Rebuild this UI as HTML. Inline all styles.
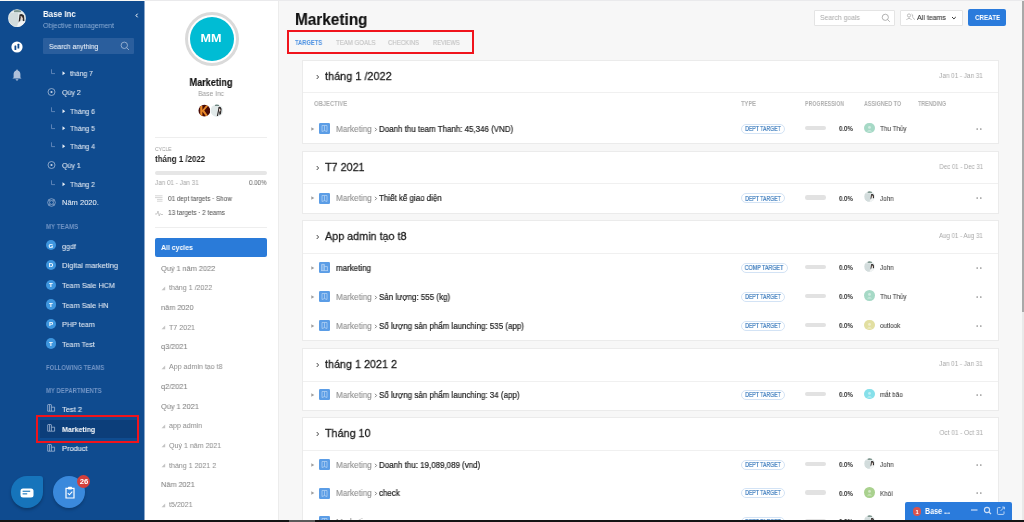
<!DOCTYPE html>
<html><head><meta charset="utf-8"><style>
html,body{margin:0;padding:0;width:1024px;height:522px;overflow:hidden;background:#f7f7f7;font-family:"Liberation Sans", sans-serif;}
body>div,body>svg{position:absolute;}
.t{white-space:nowrap;will-change:transform;}
</style></head><body>
<div style="left:0px;top:0px;width:1024px;height:1px;background:#eaeaec"></div>
<div style="left:0px;top:0px;width:145px;height:1px;background:#f8f8f6"></div>
<div style="left:0px;top:1px;width:144px;height:519px;background:#0f4b8f"></div>
<div style="left:144px;top:1px;width:1px;height:519px;background:#8aa6c9"></div>
<svg style="left:8px;top:9px" width="18" height="18" viewBox="0 0 18 18"><defs><clipPath id="cav"><circle cx="9" cy="9.2" r="8.7"/></clipPath></defs><g clip-path="url(#cav)"><rect width="18" height="18" fill="#e3eaea"/><rect x="1" y="4" width="9" height="14" fill="#d2dcdc"/><rect x="6" y="0" width="7" height="3.2" fill="#7d958d"/><path d="M11.5 5.5 Q14 4 16 6.5 L16.5 12 L15 13 L14.5 9 Q13 8 12.5 10 L11.5 16 L10 16 Q11 11 11.5 5.5 Z" fill="#2f2a2a"/><path d="M12.6 7 Q14.6 6.8 14.7 9.5 L13.6 11.5 Q12.5 10.5 12.6 7 Z" fill="#ead5cb"/><path d="M10.5 12.5 L17 12 L18 18 L9 18 Z" fill="#f2f4f4"/></g><circle cx="9" cy="9.2" r="8.6" fill="none" stroke="#f0f4f6" stroke-width="0.5"/></svg>
<svg style="left:11px;top:41px" width="12" height="12" viewBox="0 0 12 12"><circle cx="6" cy="6" r="5.6" fill="#fff"/><rect x="3.5" y="4.6" width="1.8" height="4.4" rx="0.5" fill="#0f4b8f"/><rect x="6.5" y="2.8" width="1.8" height="4.6" rx="0.5" fill="#0f4b8f"/></svg>
<svg style="left:12px;top:69px" width="10" height="12" viewBox="0 0 10 12"><path d="M5 0.6 C5.6 0.6 5.8 1 5.8 1.5 C7.6 2 8.4 3.5 8.4 5.4 L8.4 8.4 L9.6 9.6 L0.4 9.6 L1.6 8.4 L1.6 5.4 C1.6 3.5 2.4 2 4.2 1.5 C4.2 1 4.4 0.6 5 0.6 Z" fill="#aec0da"/><path d="M3.6 10.3 L6.4 10.3 C6.3 11.2 5.7 11.6 5 11.6 C4.3 11.6 3.7 11.2 3.6 10.3Z" fill="#aec0da"/></svg>
<div class="t" style="top:10px;font-size:8.8px;line-height:8.8px;color:#ffffff;font-weight:700;left:43px;transform:scaleX(0.904);transform-origin:0 0;">Base Inc</div>
<svg style="left:134px;top:12px" width="6" height="7" viewBox="0 0 6 7"><path d="M3.6 1.7 L2 3.5 L3.6 5.3" stroke="#fff" stroke-width="1.0" fill="none"/></svg>
<div class="t" style="top:22px;font-size:7.3px;line-height:7.3px;color:#8eaed6;left:43px;transform:scaleX(0.946);transform-origin:0 0;">Objective management</div>
<div style="left:43px;top:38px;width:91px;height:16px;background:#2a5e9d;border-radius:1px"></div>
<div class="t" style="top:43px;font-size:7.4px;line-height:7.4px;color:#e6edf6;-webkit-text-stroke:0.1px #e6edf6;left:48.7px;transform:scaleX(0.923);transform-origin:0 0;">Search anything</div>
<svg style="left:120px;top:41px" width="10" height="10" viewBox="0 0 10 10"><circle cx="4.3" cy="4.3" r="3.2" stroke="#a7bcd9" stroke-width="0.8" fill="none"/><path d="M6.6 6.6 L9 9" stroke="#a7bcd9" stroke-width="0.8"/></svg>
<svg style="left:50px;top:69px" width="18" height="8" viewBox="0 0 18 8"><path d="M1.5 0.3 L1.5 4.6 L5 4.6" stroke="#6e90c0" stroke-width="0.8" fill="none"/><path d="M12.5 2.2 L15.2 4.2 L12.5 6.2 Z" fill="#e8eef6"/></svg>
<div class="t" style="top:70px;font-size:7.5px;line-height:7.5px;color:#dfe7f1;-webkit-text-stroke:0.08px #dfe7f1;left:70.3px;transform:scaleX(0.919);transform-origin:0 0;">tháng 7</div>
<svg style="left:46px;top:86.5px" width="11" height="11" viewBox="0 0 11 11"><circle cx="5.5" cy="5" r="3.5" stroke="#b9c9e0" stroke-width="0.7" fill="none"/><circle cx="5.5" cy="5" r="1.1" fill="#c6d3e6"/></svg>
<div class="t" style="top:89px;font-size:7.5px;line-height:7.5px;color:#dfe7f1;-webkit-text-stroke:0.08px #dfe7f1;left:61.5px;transform:scaleX(0.939);transform-origin:0 0;">Qúy 2</div>
<svg style="left:50px;top:106.7px" width="18" height="8" viewBox="0 0 18 8"><path d="M1.5 0.3 L1.5 4.6 L5 4.6" stroke="#6e90c0" stroke-width="0.8" fill="none"/><path d="M12.5 2.2 L15.2 4.2 L12.5 6.2 Z" fill="#e8eef6"/></svg>
<div class="t" style="top:108px;font-size:7.5px;line-height:7.5px;color:#dfe7f1;-webkit-text-stroke:0.08px #dfe7f1;left:70.3px;transform:scaleX(0.908);transform-origin:0 0;">Tháng 6</div>
<svg style="left:50px;top:124.30000000000001px" width="18" height="8" viewBox="0 0 18 8"><path d="M1.5 0.3 L1.5 4.6 L5 4.6" stroke="#6e90c0" stroke-width="0.8" fill="none"/><path d="M12.5 2.2 L15.2 4.2 L12.5 6.2 Z" fill="#e8eef6"/></svg>
<div class="t" style="top:125px;font-size:7.5px;line-height:7.5px;color:#dfe7f1;-webkit-text-stroke:0.08px #dfe7f1;left:70.3px;transform:scaleX(0.908);transform-origin:0 0;">Tháng 5</div>
<svg style="left:50px;top:142.1px" width="18" height="8" viewBox="0 0 18 8"><path d="M1.5 0.3 L1.5 4.6 L5 4.6" stroke="#6e90c0" stroke-width="0.8" fill="none"/><path d="M12.5 2.2 L15.2 4.2 L12.5 6.2 Z" fill="#e8eef6"/></svg>
<div class="t" style="top:143px;font-size:7.5px;line-height:7.5px;color:#dfe7f1;-webkit-text-stroke:0.08px #dfe7f1;left:70.3px;transform:scaleX(0.908);transform-origin:0 0;">Tháng 4</div>
<svg style="left:46px;top:159.5px" width="11" height="11" viewBox="0 0 11 11"><circle cx="5.5" cy="5" r="3.5" stroke="#b9c9e0" stroke-width="0.7" fill="none"/><circle cx="5.5" cy="5" r="1.1" fill="#c6d3e6"/></svg>
<div class="t" style="top:162px;font-size:7.5px;line-height:7.5px;color:#dfe7f1;-webkit-text-stroke:0.08px #dfe7f1;left:61.5px;transform:scaleX(0.939);transform-origin:0 0;">Qúy 1</div>
<svg style="left:50px;top:179.5px" width="18" height="8" viewBox="0 0 18 8"><path d="M1.5 0.3 L1.5 4.6 L5 4.6" stroke="#6e90c0" stroke-width="0.8" fill="none"/><path d="M12.5 2.2 L15.2 4.2 L12.5 6.2 Z" fill="#e8eef6"/></svg>
<div class="t" style="top:181px;font-size:7.5px;line-height:7.5px;color:#dfe7f1;-webkit-text-stroke:0.08px #dfe7f1;left:70.3px;transform:scaleX(0.908);transform-origin:0 0;">Tháng 2</div>
<svg style="left:46px;top:196.9px" width="11" height="11" viewBox="0 0 11 11"><circle cx="5.5" cy="5.5" r="3.8" stroke="#b4c5de" stroke-width="0.65" fill="none"/><circle cx="5.5" cy="5.5" r="2" stroke="#b4c5de" stroke-width="0.6" fill="none"/><path d="M2.8 2.8 L4.1 4.1 M8.2 2.8 L6.9 4.1 M2.8 8.2 L4.1 6.9 M8.2 8.2 L6.9 6.9" stroke="#b4c5de" stroke-width="0.55"/></svg>
<div class="t" style="top:199px;font-size:7.5px;line-height:7.5px;color:#dfe7f1;-webkit-text-stroke:0.08px #dfe7f1;left:61.5px;transform:scaleX(1.003);transform-origin:0 0;">Năm 2020.</div>
<div class="t" style="top:223px;font-size:7.3px;line-height:7.3px;color:#7093c4;font-weight:700;left:45.6px;transform:scaleX(0.839);transform-origin:0 0;">MY TEAMS</div>
<div style="left:45.5px;top:239.9px;width:10.6px;height:10.6px;border-radius:50%;background:#3e96de"></div>
<div class="t" style="top:243px;font-size:6.2px;line-height:6.2px;color:#ffffff;font-weight:700;left:-149.2px;width:400px;text-align:center;">G</div>
<div class="t" style="top:243px;font-size:7.7px;line-height:7.7px;color:#dfe7f1;-webkit-text-stroke:0.08px #dfe7f1;left:62px;transform:scaleX(0.94);transform-origin:0 0;">ggdf</div>
<div style="left:45.5px;top:259.7px;width:10.6px;height:10.6px;border-radius:50%;background:#3e96de"></div>
<div class="t" style="top:262px;font-size:6.2px;line-height:6.2px;color:#ffffff;font-weight:700;left:-149.2px;width:400px;text-align:center;">D</div>
<div class="t" style="top:262px;font-size:7.7px;line-height:7.7px;color:#dfe7f1;-webkit-text-stroke:0.08px #dfe7f1;left:62px;transform:scaleX(0.978);transform-origin:0 0;">Digital marketing</div>
<div style="left:45.5px;top:279.6px;width:10.6px;height:10.6px;border-radius:50%;background:#3e96de"></div>
<div class="t" style="top:282px;font-size:6.2px;line-height:6.2px;color:#ffffff;font-weight:700;left:-149.2px;width:400px;text-align:center;">T</div>
<div class="t" style="top:282px;font-size:7.7px;line-height:7.7px;color:#dfe7f1;-webkit-text-stroke:0.08px #dfe7f1;left:62px;transform:scaleX(0.947);transform-origin:0 0;">Team Sale HCM</div>
<div style="left:45.5px;top:299.4px;width:10.6px;height:10.6px;border-radius:50%;background:#3e96de"></div>
<div class="t" style="top:302px;font-size:6.2px;line-height:6.2px;color:#ffffff;font-weight:700;left:-149.2px;width:400px;text-align:center;">T</div>
<div class="t" style="top:302px;font-size:7.7px;line-height:7.7px;color:#dfe7f1;-webkit-text-stroke:0.08px #dfe7f1;left:62px;transform:scaleX(0.94);transform-origin:0 0;">Team Sale HN</div>
<div style="left:45.5px;top:318.6px;width:10.6px;height:10.6px;border-radius:50%;background:#3e96de"></div>
<div class="t" style="top:321px;font-size:6.2px;line-height:6.2px;color:#ffffff;font-weight:700;left:-149.2px;width:400px;text-align:center;">P</div>
<div class="t" style="top:321px;font-size:7.7px;line-height:7.7px;color:#dfe7f1;-webkit-text-stroke:0.08px #dfe7f1;left:62px;transform:scaleX(0.94);transform-origin:0 0;">PHP team</div>
<div style="left:45.5px;top:338.4px;width:10.6px;height:10.6px;border-radius:50%;background:#3e96de"></div>
<div class="t" style="top:341px;font-size:6.2px;line-height:6.2px;color:#ffffff;font-weight:700;left:-149.2px;width:400px;text-align:center;">T</div>
<div class="t" style="top:341px;font-size:7.7px;line-height:7.7px;color:#dfe7f1;-webkit-text-stroke:0.08px #dfe7f1;left:62px;transform:scaleX(0.94);transform-origin:0 0;">Team Test</div>
<div class="t" style="top:364px;font-size:7.3px;line-height:7.3px;color:#7093c4;font-weight:700;left:45.6px;transform:scaleX(0.809);transform-origin:0 0;">FOLLOWING TEAMS</div>
<div class="t" style="top:387px;font-size:7.3px;line-height:7.3px;color:#7093c4;font-weight:700;left:45.6px;transform:scaleX(0.818);transform-origin:0 0;">MY DEPARTMENTS</div>
<div style="left:40px;top:420px;width:97px;height:18px;background:#0c3e7a"></div>
<svg style="left:47px;top:404.3px" width="9" height="9" viewBox="0 0 9 9"><path d="M0.7 7.2 L0.7 1 Q0.7 0.5 1.2 0.5 L3.9 0.5 Q4.4 0.5 4.4 1 L4.4 7.2 Z M2.55 0.8 L2.55 7 M4.4 3.2 L7.6 3.2 L7.6 7.2 L4.4 7.2" stroke="#a9bcd8" stroke-width="0.75" fill="none"/></svg>
<div class="t" style="top:406px;font-size:7.7px;line-height:7.7px;color:#dfe7f1;-webkit-text-stroke:0.12px #dfe7f1;left:61.9px;transform:scaleX(0.975);transform-origin:0 0;">Test 2</div>
<svg style="left:47px;top:424.0px" width="9" height="9" viewBox="0 0 9 9"><path d="M0.7 7.2 L0.7 1 Q0.7 0.5 1.2 0.5 L3.9 0.5 Q4.4 0.5 4.4 1 L4.4 7.2 Z M2.55 0.8 L2.55 7 M4.4 3.2 L7.6 3.2 L7.6 7.2 L4.4 7.2" stroke="#a9bcd8" stroke-width="0.75" fill="none"/></svg>
<div class="t" style="top:426px;font-size:7.7px;line-height:7.7px;color:#ffffff;font-weight:700;left:61.9px;transform:scaleX(0.917);transform-origin:0 0;">Marketing</div>
<svg style="left:47px;top:443.5px" width="9" height="9" viewBox="0 0 9 9"><path d="M0.7 7.2 L0.7 1 Q0.7 0.5 1.2 0.5 L3.9 0.5 Q4.4 0.5 4.4 1 L4.4 7.2 Z M2.55 0.8 L2.55 7 M4.4 3.2 L7.6 3.2 L7.6 7.2 L4.4 7.2" stroke="#a9bcd8" stroke-width="0.75" fill="none"/></svg>
<div class="t" style="top:445px;font-size:7.7px;line-height:7.7px;color:#dfe7f1;-webkit-text-stroke:0.12px #dfe7f1;left:61.9px;transform:scaleX(0.966);transform-origin:0 0;">Product</div>
<div style="left:36px;top:415px;width:103px;height:28px;border:2px solid #f0141c;box-sizing:border-box"></div>
<div style="left:11px;top:476px;width:32px;height:32px;background:#1674bb;border-radius:16px 3px 16px 16px;box-shadow:0 2px 3px rgba(0,0,0,0.25)"></div>
<svg style="left:20px;top:488px" width="14" height="10" viewBox="0 0 14 10"><rect x="0.5" y="0.5" width="13" height="9" rx="2.5" fill="#fff"/><rect x="2.6" y="2.7" width="7.6" height="1.1" fill="#1674bb"/><rect x="2.6" y="5.3" width="4.6" height="1.1" fill="#1674bb"/></svg>
<div style="left:53px;top:476px;width:32px;height:32px;background:#3a89dc;border-radius:50%;box-shadow:0 2px 3px rgba(0,0,0,0.2)"></div>
<svg style="left:64px;top:486px" width="12" height="13" viewBox="0 0 12 13"><path d="M2 2.4 L10 2.4 L10 12 L2 12 Z" stroke="#fff" stroke-width="1.2" fill="none"/><rect x="4" y="0.8" width="4" height="2.6" rx="0.6" fill="#fff"/><path d="M3.8 7.2 L5.4 8.8 L8.3 5.6" stroke="#fff" stroke-width="1.1" fill="none"/></svg>
<div style="left:77px;top:474.5px;width:13px;height:13px;background:#d33f3b;border-radius:50%"></div>
<div class="t" style="top:478px;font-size:7.0px;line-height:7.0px;color:#fff;font-weight:700;left:-116.5px;width:400px;text-align:center;transform:scaleX(1.103);transform-origin:50% 0;">26</div>
<div style="left:145px;top:1px;width:134px;height:519px;background:#fff;border-right:1px solid #ececec;box-sizing:border-box"></div>
<div style="left:184.5px;top:11.5px;width:54px;height:54px;border-radius:50%;box-sizing:border-box;border:3.5px solid #dadada;background:#fff"></div>
<div style="left:189.5px;top:16.5px;width:44px;height:44px;border-radius:50%;background:#00bcd4"></div>
<div class="t" style="top:33px;font-size:11.8px;line-height:11.8px;color:#ffffff;font-weight:700;left:11.300000000000011px;width:400px;text-align:center;transform:scaleX(1.068);transform-origin:50% 0;">MM</div>
<div class="t" style="top:78px;font-size:10.2px;line-height:10.2px;color:#111111;font-weight:700;-webkit-text-stroke:0.15px #111111;left:11px;width:400px;text-align:center;transform:scaleX(0.894);transform-origin:50% 0;">Marketing</div>
<div class="t" style="top:90px;font-size:7.0px;line-height:7.0px;color:#9a9a9a;left:11px;width:400px;text-align:center;transform:scaleX(0.954);transform-origin:50% 0;">Base Inc</div>
<svg style="left:197px;top:103px" width="28" height="16" viewBox="0 0 28 16"><defs><clipPath id="a1"><circle cx="7.4" cy="7.7" r="5.9"/></clipPath><clipPath id="a2"><circle cx="19.8" cy="7.7" r="6.2"/></clipPath></defs><g clip-path="url(#a1)"><rect width="15" height="16" fill="#4a0c06"/><path d="M3.2 3 L5.4 3 L5.4 7 L9.5 2 L11.5 2.5 L7.3 7.6 L11.5 13.5 L9.3 13.8 L5.4 8.6 L5.4 13.5 L3.2 13.5 Z" fill="#e98a2a"/></g><circle cx="19.8" cy="7.7" r="6.9" fill="#fff"/><g clip-path="url(#a2)"><rect x="13" width="15" height="16" fill="#e1e9e9"/><rect x="18" y="1" width="4" height="2" fill="#6d8580"/><path d="M21.5 4 Q24 3.2 24.6 6 L24 11 L22.5 12 L22 8 L21 13 L19.8 13 Q21 8 21.5 4 Z" fill="#2f2a2a"/><path d="M22 5.4 Q23.6 5.4 23.6 7.5 L22.7 9 Q21.8 8 22 5.4 Z" fill="#ead5cb"/></g></svg>
<div style="left:155px;top:137px;width:112px;height:1px;background:#eeeeee"></div>
<div class="t" style="top:146px;font-size:6.0px;line-height:6.0px;color:#9b9b9b;left:155.3px;transform:scaleX(0.824);transform-origin:0 0;">CYCLE</div>
<div class="t" style="top:155px;font-size:8.8px;line-height:8.8px;color:#1f1f1f;font-weight:700;left:155.3px;transform:scaleX(0.9);transform-origin:0 0;">tháng 1 /2022</div>
<div style="left:155px;top:171px;width:112px;height:3.5px;background:#e6e6e6;border-radius:2px"></div>
<div class="t" style="top:180px;font-size:6.9px;line-height:6.9px;color:#a6a6a6;left:155px;transform:scaleX(0.922);transform-origin:0 0;">Jan 01 - Jan 31</div>
<div class="t" style="top:180px;font-size:6.9px;line-height:6.9px;color:#7b7b7b;-webkit-text-stroke:0.1px #7b7b7b;right:757px;transform:scaleX(0.895);transform-origin:100% 0;">0.00%</div>
<svg style="left:155px;top:195px" width="8" height="7" viewBox="0 0 8 7"><path d="M0 0.8 L7.5 0.8 M0 2.6 L7.5 2.6 M2 4.4 L7.5 4.4 M2 6.2 L7.5 6.2" stroke="#b9b9b9" stroke-width="0.6"/></svg>
<div class="t" style="top:195px;font-size:7.0px;line-height:7.0px;color:#555555;-webkit-text-stroke:0.05px #555555;left:168.1px;transform:scaleX(0.906);transform-origin:0 0;">01 dept targets · Show</div>
<svg style="left:155px;top:210px" width="8" height="7" viewBox="0 0 8 7"><path d="M0 4 L2 4 L3 1 L4.2 6 L5.2 3.5 L6 4.5 L8 4.5" stroke="#a9a9a9" stroke-width="0.6" fill="none"/></svg>
<div class="t" style="top:209px;font-size:7.0px;line-height:7.0px;color:#555555;-webkit-text-stroke:0.05px #555555;left:168.1px;transform:scaleX(0.914);transform-origin:0 0;">13 targets · 2 teams</div>
<div style="left:155px;top:227px;width:112px;height:1px;background:#eeeeee"></div>
<div style="left:155px;top:238px;width:112px;height:19px;background:#2a7bd9;border-radius:2px"></div>
<div class="t" style="top:244px;font-size:7.4px;line-height:7.4px;color:#ffffff;font-weight:700;left:160.5px;transform:scaleX(0.935);transform-origin:0 0;">All cycles</div>
<div class="t" style="top:265px;font-size:7.6px;line-height:7.6px;color:#828282;-webkit-text-stroke:0.06px #828282;left:160.5px;transform:scaleX(0.965);transform-origin:0 0;">Quý 1 năm 2022</div>
<svg style="left:160.5px;top:285.6px" width="5" height="5" viewBox="0 0 5 5"><path d="M4.2 0.5 L4.2 4.2 L0.5 4.2 Z" fill="#c4c4c4"/></svg>
<div class="t" style="top:285px;font-size:7.1px;line-height:7.1px;color:#929292;-webkit-text-stroke:0.06px #929292;left:169px;transform:scaleX(0.995);transform-origin:0 0;">tháng 1 /2022</div>
<div class="t" style="top:304px;font-size:7.6px;line-height:7.6px;color:#828282;-webkit-text-stroke:0.06px #828282;left:160.5px;transform:scaleX(0.965);transform-origin:0 0;">năm 2020</div>
<svg style="left:160.5px;top:325.1px" width="5" height="5" viewBox="0 0 5 5"><path d="M4.2 0.5 L4.2 4.2 L0.5 4.2 Z" fill="#c4c4c4"/></svg>
<div class="t" style="top:325px;font-size:7.1px;line-height:7.1px;color:#929292;-webkit-text-stroke:0.06px #929292;left:169px;transform:scaleX(0.995);transform-origin:0 0;">T7 2021</div>
<div class="t" style="top:343px;font-size:7.6px;line-height:7.6px;color:#828282;-webkit-text-stroke:0.06px #828282;left:160.5px;transform:scaleX(0.965);transform-origin:0 0;">q3/2021</div>
<svg style="left:160.5px;top:364.5px" width="5" height="5" viewBox="0 0 5 5"><path d="M4.2 0.5 L4.2 4.2 L0.5 4.2 Z" fill="#c4c4c4"/></svg>
<div class="t" style="top:364px;font-size:7.1px;line-height:7.1px;color:#929292;-webkit-text-stroke:0.06px #929292;left:169px;transform:scaleX(0.995);transform-origin:0 0;">App admin tạo t8</div>
<div class="t" style="top:383px;font-size:7.6px;line-height:7.6px;color:#828282;-webkit-text-stroke:0.06px #828282;left:160.5px;transform:scaleX(0.965);transform-origin:0 0;">q2/2021</div>
<div class="t" style="top:403px;font-size:7.6px;line-height:7.6px;color:#828282;-webkit-text-stroke:0.06px #828282;left:160.5px;transform:scaleX(0.965);transform-origin:0 0;">Qúy 1 2021</div>
<svg style="left:160.5px;top:423.7px" width="5" height="5" viewBox="0 0 5 5"><path d="M4.2 0.5 L4.2 4.2 L0.5 4.2 Z" fill="#c4c4c4"/></svg>
<div class="t" style="top:423px;font-size:7.1px;line-height:7.1px;color:#929292;-webkit-text-stroke:0.06px #929292;left:169px;transform:scaleX(0.995);transform-origin:0 0;">app admin</div>
<svg style="left:160.5px;top:443.4px" width="5" height="5" viewBox="0 0 5 5"><path d="M4.2 0.5 L4.2 4.2 L0.5 4.2 Z" fill="#c4c4c4"/></svg>
<div class="t" style="top:443px;font-size:7.1px;line-height:7.1px;color:#929292;-webkit-text-stroke:0.06px #929292;left:169px;transform:scaleX(0.995);transform-origin:0 0;">Quý 1 năm 2021</div>
<svg style="left:160.5px;top:463.1px" width="5" height="5" viewBox="0 0 5 5"><path d="M4.2 0.5 L4.2 4.2 L0.5 4.2 Z" fill="#c4c4c4"/></svg>
<div class="t" style="top:463px;font-size:7.1px;line-height:7.1px;color:#929292;-webkit-text-stroke:0.06px #929292;left:169px;transform:scaleX(0.995);transform-origin:0 0;">tháng 1 2021 2</div>
<div class="t" style="top:481px;font-size:7.6px;line-height:7.6px;color:#828282;-webkit-text-stroke:0.06px #828282;left:160.5px;transform:scaleX(0.965);transform-origin:0 0;">Năm 2021</div>
<svg style="left:160.5px;top:502.5px" width="5" height="5" viewBox="0 0 5 5"><path d="M4.2 0.5 L4.2 4.2 L0.5 4.2 Z" fill="#c4c4c4"/></svg>
<div class="t" style="top:502px;font-size:7.1px;line-height:7.1px;color:#929292;-webkit-text-stroke:0.06px #929292;left:169px;transform:scaleX(0.995);transform-origin:0 0;">t5/2021</div>
<div style="left:279px;top:1px;width:743px;height:519px;background:#f7f7f7"></div>
<div class="t" style="top:12px;font-size:15.9px;line-height:15.9px;color:#111111;font-weight:700;-webkit-text-stroke:0.15px #111111;left:294.8px;transform:scaleX(0.966);transform-origin:0 0;">Marketing</div>
<div class="t" style="top:39px;font-size:7.2px;line-height:7.2px;color:#4f93e3;font-weight:700;left:294.9px;transform:scaleX(0.804);transform-origin:0 0;">TARGETS</div>
<div class="t" style="top:39px;font-size:7.2px;line-height:7.2px;color:#c3c3c3;-webkit-text-stroke:0.15px #c3c3c3;left:335.5px;transform:scaleX(0.843);transform-origin:0 0;">TEAM GOALS</div>
<div class="t" style="top:39px;font-size:7.2px;line-height:7.2px;color:#c3c3c3;-webkit-text-stroke:0.15px #c3c3c3;left:388.2px;transform:scaleX(0.837);transform-origin:0 0;">CHECKINS</div>
<div class="t" style="top:39px;font-size:7.2px;line-height:7.2px;color:#c3c3c3;-webkit-text-stroke:0.15px #c3c3c3;left:432.6px;transform:scaleX(0.805);transform-origin:0 0;">REVIEWS</div>
<div style="left:286.5px;top:30.3px;width:187px;height:24px;border:2px solid #f0141c;box-sizing:border-box"></div>
<div style="left:814px;top:9.5px;width:80.5px;height:16px;background:#fff;border:1px solid #e4e4e4;box-sizing:border-box;border-radius:1px"></div>
<div class="t" style="top:14px;font-size:7.2px;line-height:7.2px;color:#a9a9a9;left:819.8px;transform:scaleX(0.953);transform-origin:0 0;">Search goals</div>
<svg style="left:880.5px;top:13px" width="10" height="10" viewBox="0 0 10 10"><circle cx="4.3" cy="4.3" r="3.1" stroke="#9a9a9a" stroke-width="0.75" fill="none"/><path d="M6.5 6.5 L8.8 8.8" stroke="#9a9a9a" stroke-width="0.75"/></svg>
<div style="left:900px;top:9.5px;width:62.5px;height:16px;background:#fff;border:1px solid #e4e4e4;box-sizing:border-box;border-radius:1px"></div>
<svg style="left:906px;top:13px" width="9" height="8" viewBox="0 0 9 8"><circle cx="3" cy="2.5" r="1.6" stroke="#a0a0a0" stroke-width="0.7" fill="none"/><path d="M0.4 7 Q3 3.5 5.6 7" stroke="#a0a0a0" stroke-width="0.7" fill="none"/><path d="M5.5 1 Q7.3 1.5 6.6 3.8 M6.5 4.5 Q8 5 8.6 6.8" stroke="#a0a0a0" stroke-width="0.7" fill="none"/></svg>
<div class="t" style="top:14px;font-size:7.3px;line-height:7.3px;color:#3a3a3a;-webkit-text-stroke:0.12px #3a3a3a;left:917px;transform:scaleX(0.966);transform-origin:0 0;">All teams</div>
<svg style="left:950.5px;top:16px" width="6" height="4" viewBox="0 0 6 4"><path d="M1 1 L2.9 2.9 L4.8 1" stroke="#333" stroke-width="1" fill="none"/></svg>
<div style="left:968px;top:9px;width:38px;height:17px;background:#2a7bdc;border-radius:2px"></div>
<div class="t" style="top:14px;font-size:7.4px;line-height:7.4px;color:#ffffff;font-weight:700;left:974.6px;transform:scaleX(0.844);transform-origin:0 0;">CREATE</div>
<div style="left:302px;top:60px;width:697px;height:84px;background:#fff;border:1px solid #ebebeb;box-sizing:border-box"></div>
<svg style="left:315px;top:73.5px" width="5" height="6" viewBox="0 0 5 6"><path d="M1.7 1 L3.6 3 L1.7 5" stroke="#333" stroke-width="0.9" fill="none"/></svg>
<div class="t" style="top:70px;font-size:11.6px;line-height:11.6px;color:#1e1e1e;-webkit-text-stroke:0.3px #1e1e1e;left:325.2px;transform:scaleX(0.94);transform-origin:0 0;">tháng 1 /2022</div>
<div class="t" style="top:73px;font-size:6.8px;line-height:6.8px;color:#a8a8a8;right:41.299999999999955px;transform:scaleX(0.933);transform-origin:100% 0;">Jan 01 - Jan 31</div>
<div style="left:303px;top:92px;width:695px;height:1px;background:#f0f0f0"></div>
<div class="t" style="top:101px;font-size:6.6px;line-height:6.6px;color:#b0b0b0;font-weight:700;left:313.6px;transform:scaleX(0.886);transform-origin:0 0;">OBJECTIVE</div>
<div class="t" style="top:101px;font-size:6.6px;line-height:6.6px;color:#b0b0b0;font-weight:700;left:740.9px;transform:scaleX(0.87);transform-origin:0 0;">TYPE</div>
<div class="t" style="top:101px;font-size:6.6px;line-height:6.6px;color:#b0b0b0;font-weight:700;left:805.1px;transform:scaleX(0.796);transform-origin:0 0;">PROGRESSION</div>
<div class="t" style="top:101px;font-size:6.6px;line-height:6.6px;color:#b0b0b0;font-weight:700;left:864px;transform:scaleX(0.817);transform-origin:0 0;">ASSIGNED TO</div>
<div class="t" style="top:101px;font-size:6.6px;line-height:6.6px;color:#b0b0b0;font-weight:700;left:917.9px;transform:scaleX(0.816);transform-origin:0 0;">TRENDING</div>
<svg style="left:311px;top:126.7px" width="4" height="4" viewBox="0 0 4 4"><path d="M0.3 0.2 L3.3 2 L0.3 3.8 Z" fill="#9d9d9d"/></svg>
<svg style="left:319px;top:123.2px" width="11" height="11" viewBox="0 0 11 11"><rect width="11" height="11" rx="1.3" fill="#5b9de6"/><path d="M3 2.5 L3 8.5 L5.5 7.6 L8 8.5 L8 2.5 Z M5.5 2.5 L5.5 7.6" stroke="#b9d5f4" stroke-width="0.7" fill="none"/></svg>
<div class="t" style="top:125px;font-size:8.6px;line-height:8.6px;color:#909090;-webkit-text-stroke:0.12px #909090;left:336.4px;transform:scaleX(0.946);transform-origin:0 0;">Marketing</div>
<svg style="left:373.5px;top:126.7px" width="4" height="5" viewBox="0 0 4 5"><path d="M1 0.8 L2.6 2.5 L1 4.2" stroke="#666" stroke-width="0.8" fill="none"/></svg>
<div class="t" style="top:125px;font-size:8.6px;line-height:8.6px;color:#222222;-webkit-text-stroke:0.2px #222222;left:379px;transform:scaleX(0.925);transform-origin:0 0;">Doanh thu team Thanh: 45,346 (VND)</div>
<div style="left:741px;top:123.7px;width:43.7px;height:10px;border:1px solid #d3e3f5;box-sizing:border-box;border-radius:6px"></div>
<div class="t" style="top:126px;font-size:6.9px;line-height:6.9px;color:#3b7bbd;-webkit-text-stroke:0.22px #3b7bbd;left:562.85px;width:400px;text-align:center;transform:scaleX(0.752);transform-origin:50% 0;">DEPT TARGET</div>
<div style="left:805px;top:125.69999999999999px;width:21px;height:4.5px;background:#e2e2e2;border-radius:2.3px"></div>
<div class="t" style="top:125px;font-size:7.0px;line-height:7.0px;color:#2a2a2a;font-weight:700;left:839.1px;transform:scaleX(0.864);transform-origin:0 0;">0.0%</div>
<div style="left:863.8px;top:122.5px;width:10.8px;height:10.8px;border-radius:50%;background:#a6d9c6"></div>
<svg style="left:866px;top:124.5px" width="7" height="7" viewBox="0 0 7 7"><circle cx="3.5" cy="2.4" r="1.4" fill="rgba(255,255,255,0.5)"/><path d="M1 6.5 Q3.5 3.8 6 6.5 Z" fill="rgba(255,255,255,0.5)"/></svg>
<div class="t" style="top:125px;font-size:7.0px;line-height:7.0px;color:#333333;-webkit-text-stroke:0.04px #333333;left:879.9px;transform:scaleX(0.9);transform-origin:0 0;">Thu Thủy</div>
<svg style="left:976px;top:127.7px" width="7" height="2" viewBox="0 0 7 2"><circle cx="1.2" cy="1" r="0.85" fill="#8f8f8f"/><circle cx="4.8" cy="1" r="0.85" fill="#8f8f8f"/></svg>
<div style="left:302px;top:151px;width:697px;height:63px;background:#fff;border:1px solid #ebebeb;box-sizing:border-box"></div>
<svg style="left:315px;top:164.5px" width="5" height="6" viewBox="0 0 5 6"><path d="M1.7 1 L3.6 3 L1.7 5" stroke="#333" stroke-width="0.9" fill="none"/></svg>
<div class="t" style="top:161px;font-size:11.6px;line-height:11.6px;color:#1e1e1e;-webkit-text-stroke:0.3px #1e1e1e;left:325.2px;transform:scaleX(0.93);transform-origin:0 0;">T7 2021</div>
<div class="t" style="top:164px;font-size:6.8px;line-height:6.8px;color:#a8a8a8;right:41.299999999999955px;transform:scaleX(0.89);transform-origin:100% 0;">Dec 01 - Dec 31</div>
<div style="left:303px;top:183px;width:695px;height:1px;background:#f0f0f0"></div>
<svg style="left:311px;top:196.2px" width="4" height="4" viewBox="0 0 4 4"><path d="M0.3 0.2 L3.3 2 L0.3 3.8 Z" fill="#9d9d9d"/></svg>
<svg style="left:319px;top:192.7px" width="11" height="11" viewBox="0 0 11 11"><rect width="11" height="11" rx="1.3" fill="#5b9de6"/><path d="M3 2.5 L3 8.5 L5.5 7.6 L8 8.5 L8 2.5 Z M5.5 2.5 L5.5 7.6" stroke="#b9d5f4" stroke-width="0.7" fill="none"/></svg>
<div class="t" style="top:194px;font-size:8.6px;line-height:8.6px;color:#909090;-webkit-text-stroke:0.12px #909090;left:336.4px;transform:scaleX(0.946);transform-origin:0 0;">Marketing</div>
<svg style="left:373.5px;top:196.2px" width="4" height="5" viewBox="0 0 4 5"><path d="M1 0.8 L2.6 2.5 L1 4.2" stroke="#666" stroke-width="0.8" fill="none"/></svg>
<div class="t" style="top:194px;font-size:8.6px;line-height:8.6px;color:#222222;-webkit-text-stroke:0.2px #222222;left:379px;transform:scaleX(0.925);transform-origin:0 0;">Thiết kế giao diện</div>
<div style="left:741px;top:193.2px;width:43.7px;height:10px;border:1px solid #d3e3f5;box-sizing:border-box;border-radius:6px"></div>
<div class="t" style="top:196px;font-size:6.9px;line-height:6.9px;color:#3b7bbd;-webkit-text-stroke:0.22px #3b7bbd;left:562.85px;width:400px;text-align:center;transform:scaleX(0.752);transform-origin:50% 0;">DEPT TARGET</div>
<div style="left:805px;top:195.2px;width:21px;height:4.5px;background:#e2e2e2;border-radius:2.3px"></div>
<div class="t" style="top:195px;font-size:7.0px;line-height:7.0px;color:#2a2a2a;font-weight:700;left:839.1px;transform:scaleX(0.864);transform-origin:0 0;">0.0%</div>
<svg style="left:863.5px;top:191.4px" width="11" height="11" viewBox="0 0 18 18"><defs><clipPath id="j201"><circle cx="9" cy="9" r="8.7"/></clipPath></defs><g clip-path="url(#j201)"><rect width="18" height="18" fill="#e3eaea"/><rect x="1" y="4" width="9" height="14" fill="#d2dcdc"/><rect x="6" y="0" width="7" height="3.2" fill="#7d958d"/><path d="M11.5 5.5 Q14 4 16 6.5 L16.5 12 L15 13 L14.5 9 Q13 8 12.5 10 L11.5 16 L10 16 Q11 11 11.5 5.5 Z" fill="#2f2a2a"/><path d="M12.6 7 Q14.6 6.8 14.7 9.5 L13.6 11.5 Q12.5 10.5 12.6 7 Z" fill="#ead5cb"/><path d="M10.5 12.5 L17 12 L18 18 L9 18 Z" fill="#f2f4f4"/></g></svg>
<div class="t" style="top:195px;font-size:7.0px;line-height:7.0px;color:#333333;-webkit-text-stroke:0.04px #333333;left:879.9px;transform:scaleX(0.9);transform-origin:0 0;">John</div>
<svg style="left:976px;top:197.2px" width="7" height="2" viewBox="0 0 7 2"><circle cx="1.2" cy="1" r="0.85" fill="#8f8f8f"/><circle cx="4.8" cy="1" r="0.85" fill="#8f8f8f"/></svg>
<div style="left:302px;top:220px;width:697px;height:121px;background:#fff;border:1px solid #ebebeb;box-sizing:border-box"></div>
<svg style="left:315px;top:233.5px" width="5" height="6" viewBox="0 0 5 6"><path d="M1.7 1 L3.6 3 L1.7 5" stroke="#333" stroke-width="0.9" fill="none"/></svg>
<div class="t" style="top:230px;font-size:11.6px;line-height:11.6px;color:#1e1e1e;-webkit-text-stroke:0.3px #1e1e1e;left:325.2px;transform:scaleX(0.93);transform-origin:0 0;">App admin tạo t8</div>
<div class="t" style="top:233px;font-size:6.8px;line-height:6.8px;color:#a8a8a8;right:41.299999999999955px;transform:scaleX(0.896);transform-origin:100% 0;">Aug 01 - Aug 31</div>
<div style="left:303px;top:253px;width:695px;height:1px;background:#f0f0f0"></div>
<svg style="left:311px;top:265.6px" width="4" height="4" viewBox="0 0 4 4"><path d="M0.3 0.2 L3.3 2 L0.3 3.8 Z" fill="#9d9d9d"/></svg>
<svg style="left:319px;top:262.1px" width="11" height="11" viewBox="0 0 11 11"><rect width="11" height="11" rx="1.3" fill="#5b9de6"/><path d="M2.6 8.6 L2.6 2.4 L5.4 2.4 L5.4 8.6 M4 2.4 L4 8.6 M5.4 4.6 L8.4 4.6 L8.4 8.6 M2 8.6 L9 8.6" stroke="#c2dbf6" stroke-width="0.7" fill="none"/></svg>
<div class="t" style="top:264px;font-size:8.6px;line-height:8.6px;color:#222222;-webkit-text-stroke:0.2px #222222;left:336.4px;transform:scaleX(0.925);transform-origin:0 0;">marketing</div>
<div style="left:741px;top:262.6px;width:46.5px;height:10px;border:1px solid #d3e3f5;box-sizing:border-box;border-radius:6px"></div>
<div class="t" style="top:265px;font-size:6.9px;line-height:6.9px;color:#3b7bbd;-webkit-text-stroke:0.22px #3b7bbd;left:564.25px;width:400px;text-align:center;transform:scaleX(0.773);transform-origin:50% 0;">COMP TARGET</div>
<div style="left:805px;top:264.6px;width:21px;height:4.5px;background:#e2e2e2;border-radius:2.3px"></div>
<div class="t" style="top:264px;font-size:7.0px;line-height:7.0px;color:#2a2a2a;font-weight:700;left:839.1px;transform:scaleX(0.864);transform-origin:0 0;">0.0%</div>
<svg style="left:863.5px;top:260.8px" width="11" height="11" viewBox="0 0 18 18"><defs><clipPath id="j270"><circle cx="9" cy="9" r="8.7"/></clipPath></defs><g clip-path="url(#j270)"><rect width="18" height="18" fill="#e3eaea"/><rect x="1" y="4" width="9" height="14" fill="#d2dcdc"/><rect x="6" y="0" width="7" height="3.2" fill="#7d958d"/><path d="M11.5 5.5 Q14 4 16 6.5 L16.5 12 L15 13 L14.5 9 Q13 8 12.5 10 L11.5 16 L10 16 Q11 11 11.5 5.5 Z" fill="#2f2a2a"/><path d="M12.6 7 Q14.6 6.8 14.7 9.5 L13.6 11.5 Q12.5 10.5 12.6 7 Z" fill="#ead5cb"/><path d="M10.5 12.5 L17 12 L18 18 L9 18 Z" fill="#f2f4f4"/></g></svg>
<div class="t" style="top:264px;font-size:7.0px;line-height:7.0px;color:#333333;-webkit-text-stroke:0.04px #333333;left:879.9px;transform:scaleX(0.9);transform-origin:0 0;">John</div>
<svg style="left:976px;top:266.6px" width="7" height="2" viewBox="0 0 7 2"><circle cx="1.2" cy="1" r="0.85" fill="#8f8f8f"/><circle cx="4.8" cy="1" r="0.85" fill="#8f8f8f"/></svg>
<svg style="left:311px;top:294.6px" width="4" height="4" viewBox="0 0 4 4"><path d="M0.3 0.2 L3.3 2 L0.3 3.8 Z" fill="#9d9d9d"/></svg>
<svg style="left:319px;top:291.1px" width="11" height="11" viewBox="0 0 11 11"><rect width="11" height="11" rx="1.3" fill="#5b9de6"/><path d="M3 2.5 L3 8.5 L5.5 7.6 L8 8.5 L8 2.5 Z M5.5 2.5 L5.5 7.6" stroke="#b9d5f4" stroke-width="0.7" fill="none"/></svg>
<div class="t" style="top:293px;font-size:8.6px;line-height:8.6px;color:#909090;-webkit-text-stroke:0.12px #909090;left:336.4px;transform:scaleX(0.946);transform-origin:0 0;">Marketing</div>
<svg style="left:373.5px;top:294.6px" width="4" height="5" viewBox="0 0 4 5"><path d="M1 0.8 L2.6 2.5 L1 4.2" stroke="#666" stroke-width="0.8" fill="none"/></svg>
<div class="t" style="top:293px;font-size:8.6px;line-height:8.6px;color:#222222;-webkit-text-stroke:0.2px #222222;left:379px;transform:scaleX(0.925);transform-origin:0 0;">Sản lượng: 555 (kg)</div>
<div style="left:741px;top:291.6px;width:43.7px;height:10px;border:1px solid #d3e3f5;box-sizing:border-box;border-radius:6px"></div>
<div class="t" style="top:294px;font-size:6.9px;line-height:6.9px;color:#3b7bbd;-webkit-text-stroke:0.22px #3b7bbd;left:562.85px;width:400px;text-align:center;transform:scaleX(0.752);transform-origin:50% 0;">DEPT TARGET</div>
<div style="left:805px;top:293.6px;width:21px;height:4.5px;background:#e2e2e2;border-radius:2.3px"></div>
<div class="t" style="top:293px;font-size:7.0px;line-height:7.0px;color:#2a2a2a;font-weight:700;left:839.1px;transform:scaleX(0.864);transform-origin:0 0;">0.0%</div>
<div style="left:863.8px;top:290.4px;width:10.8px;height:10.8px;border-radius:50%;background:#a6d9c6"></div>
<svg style="left:866px;top:292.4px" width="7" height="7" viewBox="0 0 7 7"><circle cx="3.5" cy="2.4" r="1.4" fill="rgba(255,255,255,0.5)"/><path d="M1 6.5 Q3.5 3.8 6 6.5 Z" fill="rgba(255,255,255,0.5)"/></svg>
<div class="t" style="top:293px;font-size:7.0px;line-height:7.0px;color:#333333;-webkit-text-stroke:0.04px #333333;left:879.9px;transform:scaleX(0.9);transform-origin:0 0;">Thu Thủy</div>
<svg style="left:976px;top:295.6px" width="7" height="2" viewBox="0 0 7 2"><circle cx="1.2" cy="1" r="0.85" fill="#8f8f8f"/><circle cx="4.8" cy="1" r="0.85" fill="#8f8f8f"/></svg>
<svg style="left:311px;top:323.8px" width="4" height="4" viewBox="0 0 4 4"><path d="M0.3 0.2 L3.3 2 L0.3 3.8 Z" fill="#9d9d9d"/></svg>
<svg style="left:319px;top:320.3px" width="11" height="11" viewBox="0 0 11 11"><rect width="11" height="11" rx="1.3" fill="#5b9de6"/><path d="M3 2.5 L3 8.5 L5.5 7.6 L8 8.5 L8 2.5 Z M5.5 2.5 L5.5 7.6" stroke="#b9d5f4" stroke-width="0.7" fill="none"/></svg>
<div class="t" style="top:322px;font-size:8.6px;line-height:8.6px;color:#909090;-webkit-text-stroke:0.12px #909090;left:336.4px;transform:scaleX(0.946);transform-origin:0 0;">Marketing</div>
<svg style="left:373.5px;top:323.8px" width="4" height="5" viewBox="0 0 4 5"><path d="M1 0.8 L2.6 2.5 L1 4.2" stroke="#666" stroke-width="0.8" fill="none"/></svg>
<div class="t" style="top:322px;font-size:8.6px;line-height:8.6px;color:#222222;-webkit-text-stroke:0.2px #222222;left:379px;transform:scaleX(0.925);transform-origin:0 0;">Số lượng sản phẩm launching: 535 (app)</div>
<div style="left:741px;top:320.8px;width:43.7px;height:10px;border:1px solid #d3e3f5;box-sizing:border-box;border-radius:6px"></div>
<div class="t" style="top:323px;font-size:6.9px;line-height:6.9px;color:#3b7bbd;-webkit-text-stroke:0.22px #3b7bbd;left:562.85px;width:400px;text-align:center;transform:scaleX(0.752);transform-origin:50% 0;">DEPT TARGET</div>
<div style="left:805px;top:322.8px;width:21px;height:4.5px;background:#e2e2e2;border-radius:2.3px"></div>
<div class="t" style="top:322px;font-size:7.0px;line-height:7.0px;color:#2a2a2a;font-weight:700;left:839.1px;transform:scaleX(0.864);transform-origin:0 0;">0.0%</div>
<div style="left:863.8px;top:319.6px;width:10.8px;height:10.8px;border-radius:50%;background:#e2dfa1"></div>
<svg style="left:866px;top:321.6px" width="7" height="7" viewBox="0 0 7 7"><circle cx="3.5" cy="2.4" r="1.4" fill="rgba(255,255,255,0.5)"/><path d="M1 6.5 Q3.5 3.8 6 6.5 Z" fill="rgba(255,255,255,0.5)"/></svg>
<div class="t" style="top:322px;font-size:7.0px;line-height:7.0px;color:#333333;-webkit-text-stroke:0.04px #333333;left:879.9px;transform:scaleX(0.9);transform-origin:0 0;">outlook</div>
<svg style="left:976px;top:324.8px" width="7" height="2" viewBox="0 0 7 2"><circle cx="1.2" cy="1" r="0.85" fill="#8f8f8f"/><circle cx="4.8" cy="1" r="0.85" fill="#8f8f8f"/></svg>
<div style="left:302px;top:348px;width:697px;height:63px;background:#fff;border:1px solid #ebebeb;box-sizing:border-box"></div>
<svg style="left:315px;top:361.5px" width="5" height="6" viewBox="0 0 5 6"><path d="M1.7 1 L3.6 3 L1.7 5" stroke="#333" stroke-width="0.9" fill="none"/></svg>
<div class="t" style="top:358px;font-size:11.6px;line-height:11.6px;color:#1e1e1e;-webkit-text-stroke:0.3px #1e1e1e;left:325.2px;transform:scaleX(0.93);transform-origin:0 0;">tháng 1 2021 2</div>
<div class="t" style="top:361px;font-size:6.8px;line-height:6.8px;color:#a8a8a8;right:41.299999999999955px;transform:scaleX(0.933);transform-origin:100% 0;">Jan 01 - Jan 31</div>
<div style="left:303px;top:381px;width:695px;height:1px;background:#f0f0f0"></div>
<svg style="left:311px;top:392.7px" width="4" height="4" viewBox="0 0 4 4"><path d="M0.3 0.2 L3.3 2 L0.3 3.8 Z" fill="#9d9d9d"/></svg>
<svg style="left:319px;top:389.2px" width="11" height="11" viewBox="0 0 11 11"><rect width="11" height="11" rx="1.3" fill="#5b9de6"/><path d="M3 2.5 L3 8.5 L5.5 7.6 L8 8.5 L8 2.5 Z M5.5 2.5 L5.5 7.6" stroke="#b9d5f4" stroke-width="0.7" fill="none"/></svg>
<div class="t" style="top:391px;font-size:8.6px;line-height:8.6px;color:#909090;-webkit-text-stroke:0.12px #909090;left:336.4px;transform:scaleX(0.946);transform-origin:0 0;">Marketing</div>
<svg style="left:373.5px;top:392.7px" width="4" height="5" viewBox="0 0 4 5"><path d="M1 0.8 L2.6 2.5 L1 4.2" stroke="#666" stroke-width="0.8" fill="none"/></svg>
<div class="t" style="top:391px;font-size:8.6px;line-height:8.6px;color:#222222;-webkit-text-stroke:0.2px #222222;left:379px;transform:scaleX(0.925);transform-origin:0 0;">Số lượng sản phẩm launching: 34 (app)</div>
<div style="left:741px;top:389.7px;width:43.7px;height:10px;border:1px solid #d3e3f5;box-sizing:border-box;border-radius:6px"></div>
<div class="t" style="top:392px;font-size:6.9px;line-height:6.9px;color:#3b7bbd;-webkit-text-stroke:0.22px #3b7bbd;left:562.85px;width:400px;text-align:center;transform:scaleX(0.752);transform-origin:50% 0;">DEPT TARGET</div>
<div style="left:805px;top:391.7px;width:21px;height:4.5px;background:#e2e2e2;border-radius:2.3px"></div>
<div class="t" style="top:391px;font-size:7.0px;line-height:7.0px;color:#2a2a2a;font-weight:700;left:839.1px;transform:scaleX(0.864);transform-origin:0 0;">0.0%</div>
<div style="left:863.8px;top:388.5px;width:10.8px;height:10.8px;border-radius:50%;background:#86e0ea"></div>
<svg style="left:866px;top:390.5px" width="7" height="7" viewBox="0 0 7 7"><circle cx="3.5" cy="2.4" r="1.4" fill="rgba(255,255,255,0.5)"/><path d="M1 6.5 Q3.5 3.8 6 6.5 Z" fill="rgba(255,255,255,0.5)"/></svg>
<div class="t" style="top:391px;font-size:7.0px;line-height:7.0px;color:#333333;-webkit-text-stroke:0.04px #333333;left:879.9px;transform:scaleX(0.9);transform-origin:0 0;">mắt bão</div>
<svg style="left:976px;top:393.7px" width="7" height="2" viewBox="0 0 7 2"><circle cx="1.2" cy="1" r="0.85" fill="#8f8f8f"/><circle cx="4.8" cy="1" r="0.85" fill="#8f8f8f"/></svg>
<div style="left:302px;top:417px;width:697px;height:123px;background:#fff;border:1px solid #ebebeb;box-sizing:border-box"></div>
<svg style="left:315px;top:430.5px" width="5" height="6" viewBox="0 0 5 6"><path d="M1.7 1 L3.6 3 L1.7 5" stroke="#333" stroke-width="0.9" fill="none"/></svg>
<div class="t" style="top:427px;font-size:11.6px;line-height:11.6px;color:#1e1e1e;-webkit-text-stroke:0.3px #1e1e1e;left:325.2px;transform:scaleX(0.93);transform-origin:0 0;">Tháng 10</div>
<div class="t" style="top:430px;font-size:6.8px;line-height:6.8px;color:#a8a8a8;right:41.299999999999955px;transform:scaleX(0.948);transform-origin:100% 0;">Oct 01 - Oct 31</div>
<div style="left:303px;top:450px;width:695px;height:1px;background:#f0f0f0"></div>
<svg style="left:311px;top:462.5px" width="4" height="4" viewBox="0 0 4 4"><path d="M0.3 0.2 L3.3 2 L0.3 3.8 Z" fill="#9d9d9d"/></svg>
<svg style="left:319px;top:459.0px" width="11" height="11" viewBox="0 0 11 11"><rect width="11" height="11" rx="1.3" fill="#5b9de6"/><path d="M3 2.5 L3 8.5 L5.5 7.6 L8 8.5 L8 2.5 Z M5.5 2.5 L5.5 7.6" stroke="#b9d5f4" stroke-width="0.7" fill="none"/></svg>
<div class="t" style="top:461px;font-size:8.6px;line-height:8.6px;color:#909090;-webkit-text-stroke:0.12px #909090;left:336.4px;transform:scaleX(0.946);transform-origin:0 0;">Marketing</div>
<svg style="left:373.5px;top:462.5px" width="4" height="5" viewBox="0 0 4 5"><path d="M1 0.8 L2.6 2.5 L1 4.2" stroke="#666" stroke-width="0.8" fill="none"/></svg>
<div class="t" style="top:461px;font-size:8.6px;line-height:8.6px;color:#222222;-webkit-text-stroke:0.2px #222222;left:379px;transform:scaleX(0.925);transform-origin:0 0;">Doanh thu: 19,089,089 (vnd)</div>
<div style="left:741px;top:459.5px;width:43.7px;height:10px;border:1px solid #d3e3f5;box-sizing:border-box;border-radius:6px"></div>
<div class="t" style="top:462px;font-size:6.9px;line-height:6.9px;color:#3b7bbd;-webkit-text-stroke:0.22px #3b7bbd;left:562.85px;width:400px;text-align:center;transform:scaleX(0.752);transform-origin:50% 0;">DEPT TARGET</div>
<div style="left:805px;top:461.5px;width:21px;height:4.5px;background:#e2e2e2;border-radius:2.3px"></div>
<div class="t" style="top:461px;font-size:7.0px;line-height:7.0px;color:#2a2a2a;font-weight:700;left:839.1px;transform:scaleX(0.864);transform-origin:0 0;">0.0%</div>
<svg style="left:863.5px;top:457.7px" width="11" height="11" viewBox="0 0 18 18"><defs><clipPath id="j467"><circle cx="9" cy="9" r="8.7"/></clipPath></defs><g clip-path="url(#j467)"><rect width="18" height="18" fill="#e3eaea"/><rect x="1" y="4" width="9" height="14" fill="#d2dcdc"/><rect x="6" y="0" width="7" height="3.2" fill="#7d958d"/><path d="M11.5 5.5 Q14 4 16 6.5 L16.5 12 L15 13 L14.5 9 Q13 8 12.5 10 L11.5 16 L10 16 Q11 11 11.5 5.5 Z" fill="#2f2a2a"/><path d="M12.6 7 Q14.6 6.8 14.7 9.5 L13.6 11.5 Q12.5 10.5 12.6 7 Z" fill="#ead5cb"/><path d="M10.5 12.5 L17 12 L18 18 L9 18 Z" fill="#f2f4f4"/></g></svg>
<div class="t" style="top:461px;font-size:7.0px;line-height:7.0px;color:#333333;-webkit-text-stroke:0.04px #333333;left:879.9px;transform:scaleX(0.9);transform-origin:0 0;">John</div>
<svg style="left:976px;top:463.5px" width="7" height="2" viewBox="0 0 7 2"><circle cx="1.2" cy="1" r="0.85" fill="#8f8f8f"/><circle cx="4.8" cy="1" r="0.85" fill="#8f8f8f"/></svg>
<svg style="left:311px;top:491.1px" width="4" height="4" viewBox="0 0 4 4"><path d="M0.3 0.2 L3.3 2 L0.3 3.8 Z" fill="#9d9d9d"/></svg>
<svg style="left:319px;top:487.6px" width="11" height="11" viewBox="0 0 11 11"><rect width="11" height="11" rx="1.3" fill="#5b9de6"/><path d="M3 2.5 L3 8.5 L5.5 7.6 L8 8.5 L8 2.5 Z M5.5 2.5 L5.5 7.6" stroke="#b9d5f4" stroke-width="0.7" fill="none"/></svg>
<div class="t" style="top:489px;font-size:8.6px;line-height:8.6px;color:#909090;-webkit-text-stroke:0.12px #909090;left:336.4px;transform:scaleX(0.946);transform-origin:0 0;">Marketing</div>
<svg style="left:373.5px;top:491.1px" width="4" height="5" viewBox="0 0 4 5"><path d="M1 0.8 L2.6 2.5 L1 4.2" stroke="#666" stroke-width="0.8" fill="none"/></svg>
<div class="t" style="top:489px;font-size:8.6px;line-height:8.6px;color:#222222;-webkit-text-stroke:0.2px #222222;left:379px;transform:scaleX(0.925);transform-origin:0 0;">check</div>
<div style="left:741px;top:488.1px;width:43.7px;height:10px;border:1px solid #d3e3f5;box-sizing:border-box;border-radius:6px"></div>
<div class="t" style="top:490px;font-size:6.9px;line-height:6.9px;color:#3b7bbd;-webkit-text-stroke:0.22px #3b7bbd;left:562.85px;width:400px;text-align:center;transform:scaleX(0.752);transform-origin:50% 0;">DEPT TARGET</div>
<div style="left:805px;top:490.1px;width:21px;height:4.5px;background:#e2e2e2;border-radius:2.3px"></div>
<div class="t" style="top:490px;font-size:7.0px;line-height:7.0px;color:#2a2a2a;font-weight:700;left:839.1px;transform:scaleX(0.864);transform-origin:0 0;">0.0%</div>
<div style="left:863.8px;top:486.9px;width:10.8px;height:10.8px;border-radius:50%;background:#a9d18e"></div>
<svg style="left:866px;top:488.9px" width="7" height="7" viewBox="0 0 7 7"><circle cx="3.5" cy="2.4" r="1.4" fill="rgba(255,255,255,0.5)"/><path d="M1 6.5 Q3.5 3.8 6 6.5 Z" fill="rgba(255,255,255,0.5)"/></svg>
<div class="t" style="top:490px;font-size:7.0px;line-height:7.0px;color:#333333;-webkit-text-stroke:0.04px #333333;left:879.9px;transform:scaleX(0.9);transform-origin:0 0;">Khôi</div>
<svg style="left:976px;top:492.1px" width="7" height="2" viewBox="0 0 7 2"><circle cx="1.2" cy="1" r="0.85" fill="#8f8f8f"/><circle cx="4.8" cy="1" r="0.85" fill="#8f8f8f"/></svg>
<svg style="left:311px;top:519.8px" width="4" height="4" viewBox="0 0 4 4"><path d="M0.3 0.2 L3.3 2 L0.3 3.8 Z" fill="#9d9d9d"/></svg>
<svg style="left:319px;top:516.3px" width="11" height="11" viewBox="0 0 11 11"><rect width="11" height="11" rx="1.3" fill="#5b9de6"/><path d="M3 2.5 L3 8.5 L5.5 7.6 L8 8.5 L8 2.5 Z M5.5 2.5 L5.5 7.6" stroke="#b9d5f4" stroke-width="0.7" fill="none"/></svg>
<div class="t" style="top:518px;font-size:8.6px;line-height:8.6px;color:#909090;-webkit-text-stroke:0.12px #909090;left:336.4px;transform:scaleX(0.946);transform-origin:0 0;">Marketing</div>
<svg style="left:373.5px;top:519.8px" width="4" height="5" viewBox="0 0 4 5"><path d="M1 0.8 L2.6 2.5 L1 4.2" stroke="#666" stroke-width="0.8" fill="none"/></svg>
<div style="left:741px;top:516.8px;width:43.7px;height:10px;border:1px solid #d3e3f5;box-sizing:border-box;border-radius:6px"></div>
<div class="t" style="top:519px;font-size:6.9px;line-height:6.9px;color:#3b7bbd;-webkit-text-stroke:0.22px #3b7bbd;left:562.85px;width:400px;text-align:center;transform:scaleX(0.752);transform-origin:50% 0;">DEPT TARGET</div>
<div style="left:805px;top:518.8px;width:21px;height:4.5px;background:#e2e2e2;border-radius:2.3px"></div>
<div class="t" style="top:518px;font-size:7.0px;line-height:7.0px;color:#2a2a2a;font-weight:700;left:839.1px;transform:scaleX(0.864);transform-origin:0 0;">0.0%</div>
<svg style="left:863.5px;top:515.0px" width="11" height="11" viewBox="0 0 18 18"><defs><clipPath id="j524"><circle cx="9" cy="9" r="8.7"/></clipPath></defs><g clip-path="url(#j524)"><rect width="18" height="18" fill="#e3eaea"/><rect x="1" y="4" width="9" height="14" fill="#d2dcdc"/><rect x="6" y="0" width="7" height="3.2" fill="#7d958d"/><path d="M11.5 5.5 Q14 4 16 6.5 L16.5 12 L15 13 L14.5 9 Q13 8 12.5 10 L11.5 16 L10 16 Q11 11 11.5 5.5 Z" fill="#2f2a2a"/><path d="M12.6 7 Q14.6 6.8 14.7 9.5 L13.6 11.5 Q12.5 10.5 12.6 7 Z" fill="#ead5cb"/><path d="M10.5 12.5 L17 12 L18 18 L9 18 Z" fill="#f2f4f4"/></g></svg>
<svg style="left:976px;top:520.8px" width="7" height="2" viewBox="0 0 7 2"><circle cx="1.2" cy="1" r="0.85" fill="#8f8f8f"/><circle cx="4.8" cy="1" r="0.85" fill="#8f8f8f"/></svg>
<div style="left:905px;top:502px;width:107px;height:18px;background:#2a7bdc;border-radius:2px 2px 0 0"></div>
<div style="left:912.8px;top:507.4px;width:8.4px;height:8.4px;border-radius:50%;background:#d9534f"></div>
<div class="t" style="top:510px;font-size:5.8px;line-height:5.8px;color:#fff;font-weight:700;left:717px;width:400px;text-align:center;">1</div>
<div class="t" style="top:507px;font-size:8.6px;line-height:8.6px;color:#ffffff;font-weight:700;left:925px;transform:scaleX(0.83);transform-origin:0 0;">Base ...</div>
<svg style="left:970px;top:505px" width="36" height="12" viewBox="0 0 36 12"><path d="M1 5 L7.5 5" stroke="#cfe0f6" stroke-width="1.2"/><circle cx="17" cy="5" r="2.6" stroke="#cfe0f6" stroke-width="1.1" fill="none"/><path d="M18.8 6.8 L21 9" stroke="#cfe0f6" stroke-width="1.2"/><path d="M30.5 2.6 L28.2 2.6 Q27.4 2.6 27.4 3.4 L27.4 8.6 Q27.4 9.4 28.2 9.4 L33.2 9.4 Q34 9.4 34 8.6 L34 6.4" stroke="#c4daf6" stroke-width="0.95" fill="none"/><path d="M30.6 5.9 L34.2 2.3 M32.2 2.1 L34.4 2.1 L34.4 4.3" stroke="#c4daf6" stroke-width="0.95" fill="none"/></svg>
<div style="left:1022px;top:1px;width:2px;height:519px;background:#e9e9e9"></div>
<div style="left:1022px;top:1px;width:2px;height:311px;background:#a9a9a9"></div>
<div style="left:0px;top:520px;width:1024px;height:2px;background:#141414"></div>
<div style="left:289px;top:520px;width:26px;height:2px;background:#5a5a5a"></div>
</body></html>
